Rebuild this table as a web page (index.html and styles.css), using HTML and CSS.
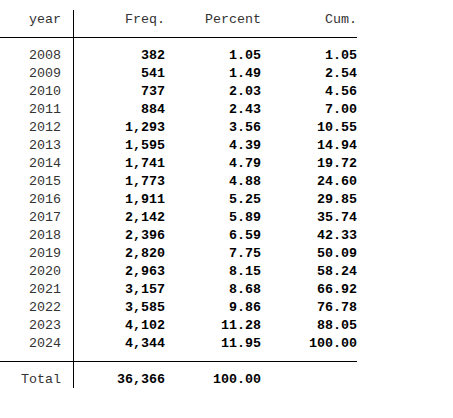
FILE: index.html
```html
<!DOCTYPE html>
<html lang="en">
<head>
    <meta charset="UTF-8">
    <title>tabulate year</title>
    <link rel="stylesheet" href="styles.css">
</head>
<body>
    <table class="tab">
        <colgroup>
            <col class="c-label">
            <col class="c-freq">
            <col class="c-pct">
            <col class="c-cum">
        </colgroup>
        <tr class="head">
            <td class="label">year</td>
            <td>Freq.</td>
            <td>Percent</td>
            <td>Cum.</td>
        </tr>
        <tr class="first"><td class="label">2008</td><td class="num">382</td><td class="num">1.05</td><td class="num">1.05</td></tr>
        <tr><td class="label">2009</td><td class="num">541</td><td class="num">1.49</td><td class="num">2.54</td></tr>
        <tr><td class="label">2010</td><td class="num">737</td><td class="num">2.03</td><td class="num">4.56</td></tr>
        <tr><td class="label">2011</td><td class="num">884</td><td class="num">2.43</td><td class="num">7.00</td></tr>
        <tr><td class="label">2012</td><td class="num">1,293</td><td class="num">3.56</td><td class="num">10.55</td></tr>
        <tr><td class="label">2013</td><td class="num">1,595</td><td class="num">4.39</td><td class="num">14.94</td></tr>
        <tr><td class="label">2014</td><td class="num">1,741</td><td class="num">4.79</td><td class="num">19.72</td></tr>
        <tr><td class="label">2015</td><td class="num">1,773</td><td class="num">4.88</td><td class="num">24.60</td></tr>
        <tr><td class="label">2016</td><td class="num">1,911</td><td class="num">5.25</td><td class="num">29.85</td></tr>
        <tr><td class="label">2017</td><td class="num">2,142</td><td class="num">5.89</td><td class="num">35.74</td></tr>
        <tr><td class="label">2018</td><td class="num">2,396</td><td class="num">6.59</td><td class="num">42.33</td></tr>
        <tr><td class="label">2019</td><td class="num">2,820</td><td class="num">7.75</td><td class="num">50.09</td></tr>
        <tr><td class="label">2020</td><td class="num">2,963</td><td class="num">8.15</td><td class="num">58.24</td></tr>
        <tr><td class="label">2021</td><td class="num">3,157</td><td class="num">8.68</td><td class="num">66.92</td></tr>
        <tr><td class="label">2022</td><td class="num">3,585</td><td class="num">9.86</td><td class="num">76.78</td></tr>
        <tr><td class="label">2023</td><td class="num">4,102</td><td class="num">11.28</td><td class="num">88.05</td></tr>
        <tr class="last"><td class="label">2024</td><td class="num">4,344</td><td class="num">11.95</td><td class="num">100.00</td></tr>
        <tr class="total">
            <td class="label">Total</td>
            <td class="num">36,366</td>
            <td class="num">100.00</td>
            <td></td>
        </tr>
    </table>
</body>
</html>
```

FILE: styles.css
```css
body {
    margin: 0;
    padding-top: 10px;
    background-color: #fff;
    font-family: "Liberation Mono", "Courier New", monospace;
    font-size: 13.333px;
    color: #333;
}
.tab {
    width: 357px;
    table-layout: fixed;
    border-collapse: separate;
    border-spacing: 0;
}
.c-label { width: 74px; }
.c-freq { width: 91px; }
.c-pct { width: 96px; }
.c-cum { width: 96px; }
.tab td {
    box-sizing: border-box;
    padding: 2px 0 0 0;
    height: 18px;
    line-height: 16px;
    text-align: right;
    white-space: pre;
    vertical-align: top;
}
.tab td.label {
    padding-right: 12px;
    border-right: 1px solid #000;
}
.tab .num {
    font-weight: bold;
    color: #000;
}
.head td {
    height: 28px;
    padding-bottom: 9px;
    border-bottom: 1px solid #000;
}
.first td {
    height: 26px;
    padding-top: 10px;
}
.last td {
    height: 28px;
    padding-bottom: 9px;
    border-bottom: 1px solid #000;
}
.total td {
    height: 26px;
    padding-top: 10px;
}
```
